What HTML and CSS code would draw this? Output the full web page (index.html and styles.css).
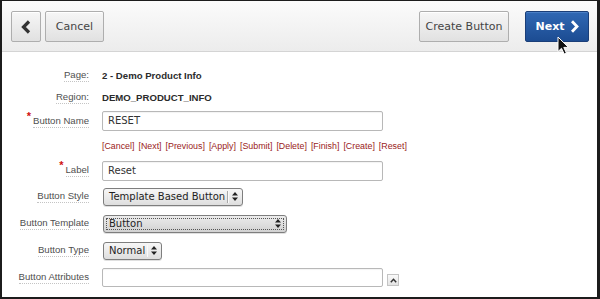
FILE: index.html
```html
<!DOCTYPE html>
<html>
<head>
    <title>Create Button</title>
    <link rel="stylesheet" href="styles.css">
</head>
<body>
<div class="frame">
    <div class="toolbar">
        <div class="toolbar-left">
            <button class="tb-btn back" title="Previous">
                <svg width="12" height="14" viewBox="0 0 12 14"><path d="M9 1.5 L3.5 7 L9 12.5" fill="none" stroke="#333" stroke-width="3.2"/></svg>
            </button>
            <button class="tb-btn cancel">Cancel</button>
        </div>
        <div class="toolbar-right">
            <button class="tb-btn create">Create Button</button>
            <button class="tb-btn next">Next
                <svg width="9" height="13" viewBox="0 0 9 13"><path d="M2 1.2 L7 6.5 L2 11.8" fill="none" stroke="#fff" stroke-width="2.8"/></svg>
            </button>
        </div>
    </div>

    <div class="form">
        <div class="cell-label"><span class="lbl">Page:</span></div>
        <div class="cell-field"><span class="value">2 - Demo Product Info</span></div>

        <div class="cell-label"><span class="lbl">Region:</span></div>
        <div class="cell-field"><span class="value">DEMO_PRODUCT_INFO</span></div>

        <div class="cell-label"><span class="req">*</span><span class="lbl">Button Name</span></div>
        <div class="cell-field"><div class="text-input">RESET</div></div>

        <div class="cell-label"></div>
        <div class="cell-field links">
            <a>[Cancel]</a><a>[Next]</a><a>[Previous]</a><a>[Apply]</a><a>[Submit]</a><a>[Delete]</a><a>[Finish]</a><a>[Create]</a><a>[Reset]</a>
        </div>

        <div class="cell-label"><span class="req">*</span><span class="lbl">Label</span></div>
        <div class="cell-field"><div class="text-input">Reset</div></div>

        <div class="cell-label"><span class="lbl">Button Style</span></div>
        <div class="cell-field">
            <div class="select style-select"><span class="sel-text">Template Based Button</span><span class="sel-sep"></span><span class="sel-arrows"><svg width="6" height="9" viewBox="0 0 6 9"><path d="M3 0 L6 3.4 L0 3.4 Z M0 5.6 L6 5.6 L3 9 Z" fill="#222"/></svg></span></div>
        </div>

        <div class="cell-label"><span class="lbl">Button Template</span></div>
        <div class="cell-field">
            <div class="select template-select"><span class="focus-ring"><span class="sel-text">Button</span><span class="sel-arrows"><svg width="6" height="9" viewBox="0 0 6 9"><path d="M3 0 L6 3.4 L0 3.4 Z M0 5.6 L6 5.6 L3 9 Z" fill="#222"/></svg></span></span></div>
        </div>

        <div class="cell-label"><span class="lbl">Button Type</span></div>
        <div class="cell-field">
            <div class="select type-select"><span class="sel-text">Normal</span><span class="sel-sep"></span><span class="sel-arrows"><svg width="6" height="9" viewBox="0 0 6 9"><path d="M3 0 L6 3.4 L0 3.4 Z M0 5.6 L6 5.6 L3 9 Z" fill="#222"/></svg></span></div>
        </div>

        <div class="cell-label"><span class="lbl">Button Attributes</span></div>
        <div class="cell-field attr-field">
            <div class="text-input"></div>
            <button class="expand-btn"><svg width="7" height="5" viewBox="0 0 7 5"><path d="M0.8 4.2 L3.5 1.3 L6.2 4.2" fill="none" stroke="#333" stroke-width="1.5"/></svg></button>
        </div>
    </div>

    <svg class="cursor" width="13" height="19" viewBox="0 0 13 19">
        <path d="M1 1 L1 15.5 L4.5 12.3 L7.2 18 L9.4 17 L6.8 11.4 L11.5 11.4 Z" fill="#111" stroke="#fff" stroke-width="1"/>
    </svg>
</div>
</body>
</html>
```

FILE: styles.css
```css
:root {
    --frame-color: #1c1c1c;
    --label-color: #4f4f4f;
    --value-color: #2b2b2b;
    --link-color: #9a2222;
    --req-color: #d01010;
    --input-border: #b8b8b8;
    --primary: #1f4f95;
}
* {
    box-sizing: border-box;
}
body {
    margin: 0;
    padding: 0;
    background: #ffffff;
    font-family: "Liberation Sans", Arial, sans-serif;
}
.frame {
    position: relative;
    width: 600px;
    height: 299px;
    border-top: 1px solid var(--frame-color);
    border-left: 2px solid var(--frame-color);
    border-right: 3px solid var(--frame-color);
    border-bottom: 2px solid var(--frame-color);
    background: #ffffff;
    overflow: hidden;
}
.toolbar {
    display: flex;
    justify-content: space-between;
    align-items: flex-start;
    height: 51px;
    padding: 10px 8px 0 9px;
    background: linear-gradient(#fbfbfb, #ececec);
    border-bottom: 1px solid #d4d4d4;
}
.toolbar-left,
.toolbar-right {
    display: flex;
}
.toolbar-left {
    gap: 4px;
}
.toolbar-right {
    gap: 16px;
}
.tb-btn {
    height: 31px;
    margin: 0;
    padding: 0;
    border: 1px solid #aeaeae;
    border-radius: 2px;
    background: linear-gradient(#f6f6f6, #e1e1e1);
    color: #444;
    font-family: "DejaVu Sans", sans-serif;
    font-size: 11px;
    display: flex;
    align-items: center;
    justify-content: center;
    box-shadow: inset 0 1px 0 #ffffff;
}
.tb-btn.back {
    width: 30px;
}
.tb-btn.cancel {
    width: 59px;
}
.tb-btn.create {
    width: 90px;
}
.tb-btn.next {
    width: 64px;
    gap: 5px;
    border-color: #1a3e78;
    background: linear-gradient(#3068b4, #1c4c92);
    color: #ffffff;
    font-weight: bold;
    box-shadow: inset 0 1px 0 #4a7fc6;
}
.form {
    display: grid;
    grid-template-columns: 87px 1fr;
    grid-template-rows: 22px 23px 24px 25px 25px 27px 27px 27px 26px;
    column-gap: 13px;
    padding-top: 12px;
    align-items: center;
}
.cell-label {
    justify-self: end;
    display: flex;
    align-items: flex-start;
    font-size: 9.6px;
    color: var(--label-color);
    white-space: nowrap;
}
.lbl {
    border-bottom: 1px dotted #c4c4c4;
    padding-bottom: 1px;
}
.req {
    color: var(--req-color);
    font-weight: bold;
    font-size: 11px;
    line-height: 8px;
    margin-top: -3px;
    margin-right: 2px;
}
.cell-field {
    display: flex;
    align-items: center;
}
.value {
    font-weight: bold;
    font-size: 9.6px;
    color: var(--value-color);
}
.text-input {
    width: 281px;
    height: 20px;
    border: 1px solid var(--input-border);
    border-radius: 2px;
    background: #ffffff;
    padding: 0 5px;
    font-family: "DejaVu Sans", sans-serif;
    font-size: 10px;
    line-height: 18px;
    color: #333;
    box-shadow: inset 0 1px 1px rgba(0, 0, 0, 0.05);
}
.links {
    gap: 4px;
    font-size: 8.85px;
    white-space: nowrap;
}
.links a {
    color: var(--link-color);
}
.select {
    height: 18px;
    display: flex;
    align-items: center;
    margin-left: 1px;
    border: 1px solid #7e7e7e;
    border-radius: 3px;
    background: linear-gradient(#f7f7f7, #dedede);
    font-family: "DejaVu Sans", sans-serif;
    font-size: 10px;
    color: #1e1e1e;
    white-space: nowrap;
    box-shadow: 0 1px 0 rgba(0, 0, 0, 0.12);
}
.sel-text {
    padding-left: 5px;
    flex: 1;
}
.sel-sep {
    width: 1px;
    height: 12px;
    background: #a8a8a8;
    border-right: 1px solid #fafafa;
    box-sizing: content-box;
    margin: 0 3px 0 2px;
}
.sel-arrows {
    display: flex;
    padding-right: 4px;
}
.style-select {
    width: 140px;
}
.type-select {
    width: 59px;
}
.template-select {
    width: 184px;
    padding: 2px;
    background: linear-gradient(#ececec, #d2d2d2);
}
.focus-ring {
    display: flex;
    align-items: center;
    width: 100%;
    height: 100%;
    border: 1px dotted #555;
}
.focus-ring .sel-text {
    padding-left: 2px;
}
.focus-ring .sel-arrows {
    padding-right: 2px;
}
.attr-field {
    gap: 4px;
}
.attr-field .text-input {
    height: 19px;
}
.expand-btn {
    width: 12px;
    height: 12px;
    margin: 6px 0 0 0;
    padding: 0;
    border: 1px solid #c4c4c4;
    background: linear-gradient(#fafafa, #e4e4e4);
    display: flex;
    align-items: center;
    justify-content: center;
}
.cursor {
    position: absolute;
    left: 555px;
    top: 35px;
}
```
